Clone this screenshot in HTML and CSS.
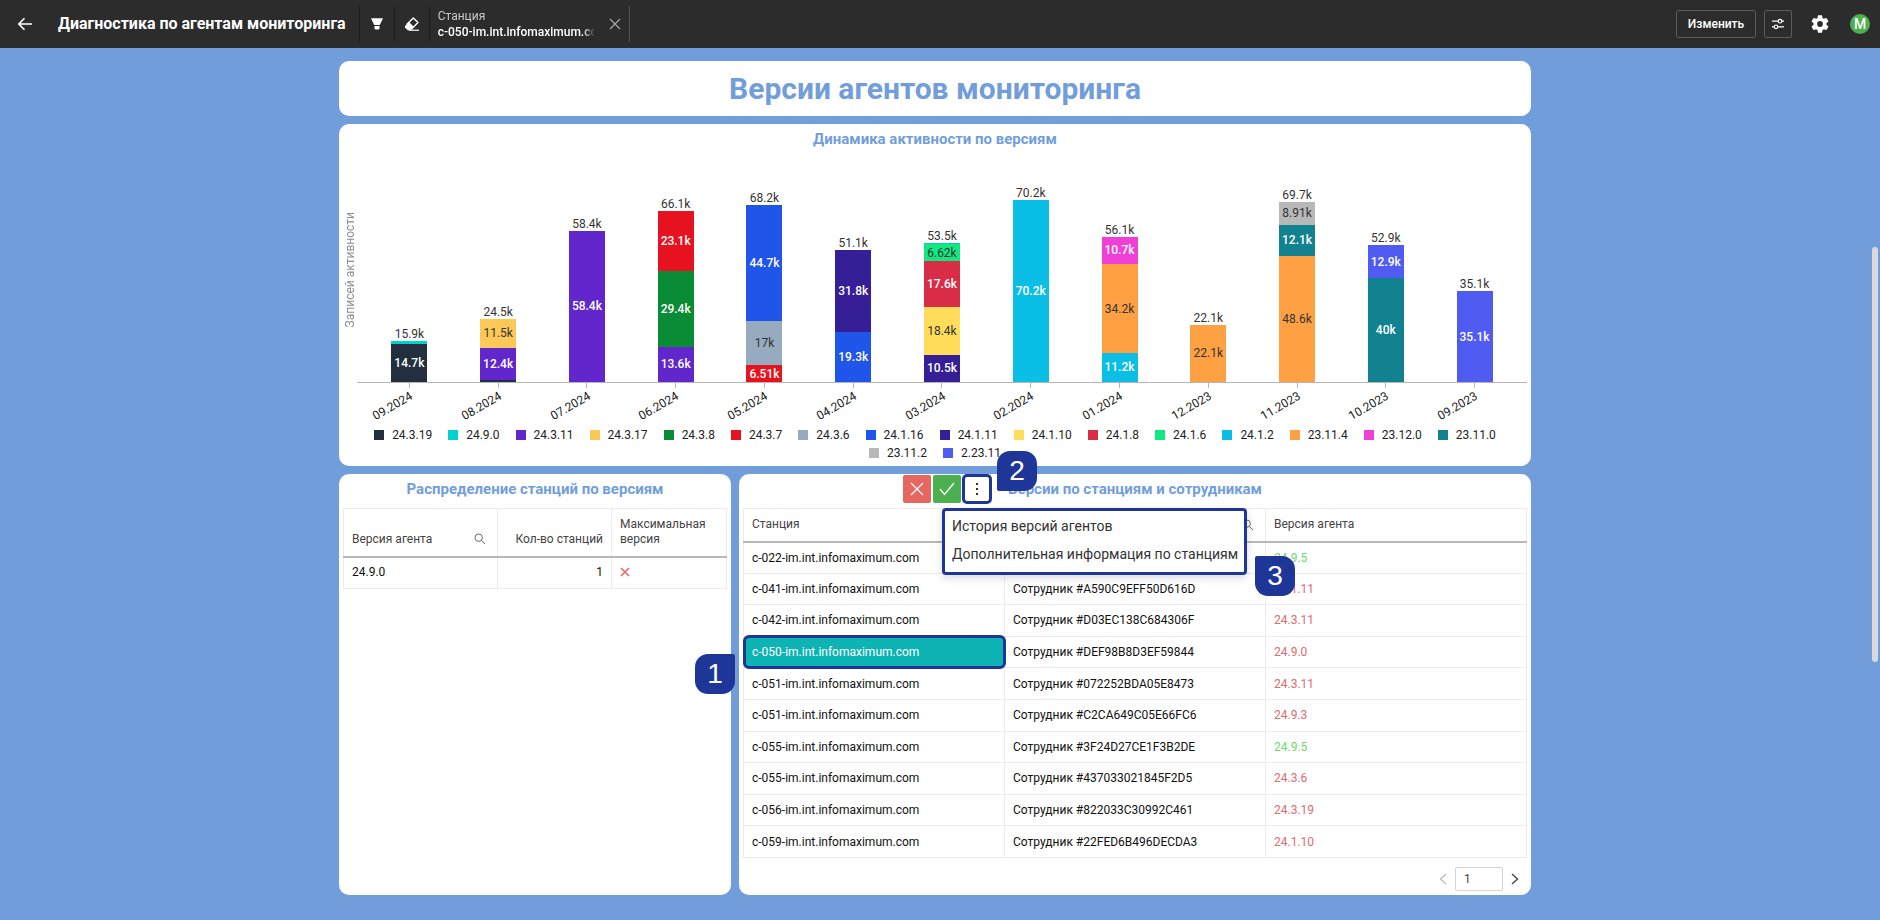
FILE: index.html
```html
<!DOCTYPE html>
<html lang="ru">
<head>
<meta charset="utf-8">
<title>Диагностика по агентам мониторинга</title>
<link rel="stylesheet" href="styles.css">
</head>
<body>
<header class="topbar">
  <button class="icon-btn back" aria-label="Назад"><svg width="16" height="16" viewBox="0 0 16 16" fill="none" stroke="#fff" stroke-width="1.6"><path d="M15 8H2M7.5 2.2 1.8 8l5.7 5.8"/></svg></button>
  <h1 class="page-name">Диагностика по агентам мониторинга</h1>
  <button class="icon-btn cell" aria-label="Фильтр"><svg width="14" height="14" viewBox="0 0 14 14" fill="#fff"><path d="M1 1.300h12L9.800 8H4.200zM4.500 9h5v2.700l-1 .8h-3l-1-.8z"/></svg></button>
  <button class="icon-btn cell" aria-label="Очистить"><svg width="16" height="16" viewBox="0 0 16 16"><path d="M9.300 2 14 6.500 8 12.600 3.200 8z" fill="none" stroke="#fff" stroke-width="1.400" stroke-linejoin="round"/><path d="M5 6 10 11 6.500 14.600H4L1 11.600V10z" fill="#fff"/><path d="M6 14.200h9" stroke="#fff" stroke-width="1.200"/></svg></button>
  <div class="filter cell">
    <div class="filter-text"><span class="filter-name">Станция</span><span class="filter-value">c-050-im.int.infomaximum.com</span></div>
    <button class="icon-btn" aria-label="Убрать фильтр"><svg width="12" height="12" viewBox="0 0 12 12" stroke="#aaa" stroke-width="1.100"><path d="m1 1 10 10M11 1 1 11"/></svg></button>
  </div>
  <div class="actions">
    <button class="outline-btn">Изменить</button>
    <button class="outline-btn square" aria-label="Параметры"><svg width="14" height="14" viewBox="0 0 14 14" fill="none" stroke="#fff" stroke-width="1.200"><path d="M1 4.200h6M11 4.200h2M1 9.800h2M7 9.800h6"/><circle cx="9" cy="4.200" r="1.800"/><circle cx="5" cy="9.800" r="1.800"/></svg></button>
    <button class="icon-btn gear" aria-label="Настройки"><svg width="18" height="18" viewBox="2 2 20 20" fill="#fff"><path d="M19.140 12.940c.04-.3.060-.610.060-.940s-.02-.640-.07-.940l2.030-1.580a.49.490 0 0 0 .12-.610l-1.920-3.320a.488.488 0 0 0-.590-.22l-2.390.960c-.5-.380-1.030-.7-1.620-.940l-.360-2.540a.484.484 0 0 0-.480-.410h-3.840c-.24 0-.430.170-.470.410l-.360 2.540c-.590.240-1.130.570-1.620.940l-2.390-.960a.488.488 0 0 0-.590.220L2.740 8.870c-.12.210-.08.470.12.610l2.030 1.580c-.05.3-.09.630-.09.940s.02.640.07.940l-2.030 1.580a.49.490 0 0 0-.12.610l1.920 3.320c.12.220.370.290.590.220l2.390-.960c.5.380 1.030.7 1.620.940l.360 2.540c.05.240.240.410.480.410h3.840c.24 0 .440-.170.470-.410l.360-2.540c.590-.240 1.130-.560 1.620-.940l2.390.960c.22.080.470 0 .590-.22l1.920-3.320c.12-.22.070-.470-.12-.610zM12 15.200A3.200 3.200 0 1 1 12 8.800a3.200 3.200 0 0 1 0 6.400z"/></svg></button>
    <button class="avatar">М</button>
  </div>
</header>

<main class="board">
  <section class="card banner"><h2>Версии агентов мониторинга</h2></section>

  <section class="card chart">
    <h3>Динамика активности по версиям</h3>
    <div class="chart-body">
      <div class="axis-name"><span>Записей активности</span></div>
      <div class="plot-area">
        <div class="plot">
          <div class="col"><b>15.9k</b><i class="seg aqua" style="--v:1.2"></i><i class="seg navy" style="--v:14.7">14.7k</i></div>
          <div class="col"><b>24.5k</b><i class="seg amber dark" style="--v:11.5">11.5k</i><i class="seg violet" style="--v:12.4">12.4k</i><i class="seg navy" style="--v:0.6"></i></div>
          <div class="col"><b>58.4k</b><i class="seg violet" style="--v:58.4">58.4k</i></div>
          <div class="col"><b>66.1k</b><i class="seg red" style="--v:23.1">23.1k</i><i class="seg green" style="--v:29.4">29.4k</i><i class="seg violet" style="--v:13.6">13.6k</i></div>
          <div class="col"><b>68.2k</b><i class="seg blue" style="--v:44.7">44.7k</i><i class="seg slate dark" style="--v:17">17k</i><i class="seg red" style="--v:6.51">6.51k</i></div>
          <div class="col"><b>51.1k</b><i class="seg indigo" style="--v:31.8">31.8k</i><i class="seg blue" style="--v:19.3">19.3k</i></div>
          <div class="col"><b>53.5k</b><i class="seg cyan" style="--v:0.38"></i><i class="seg mint dark" style="--v:6.62">6.62k</i><i class="seg crimson" style="--v:17.6">17.6k</i><i class="seg yellow dark" style="--v:18.4">18.4k</i><i class="seg indigo" style="--v:10.5">10.5k</i></div>
          <div class="col"><b>70.2k</b><i class="seg cyan" style="--v:70.2">70.2k</i></div>
          <div class="col"><b>56.1k</b><i class="seg pink" style="--v:10.7">10.7k</i><i class="seg orange dark" style="--v:34.2">34.2k</i><i class="seg cyan" style="--v:11.2">11.2k</i></div>
          <div class="col"><b>22.1k</b><i class="seg orange dark" style="--v:22.1">22.1k</i></div>
          <div class="col"><b>69.7k</b><i class="seg gray dark" style="--v:8.91">8.91k</i><i class="seg teal" style="--v:12.1">12.1k</i><i class="seg orange dark" style="--v:48.6">48.6k</i></div>
          <div class="col"><b>52.9k</b><i class="seg iris" style="--v:12.9">12.9k</i><i class="seg teal" style="--v:40">40k</i></div>
          <div class="col"><b>35.1k</b><i class="seg iris" style="--v:35.1">35.1k</i></div>
        </div>
        <div class="ticks">
          <div><span>09.2024</span></div><div><span>08.2024</span></div><div><span>07.2024</span></div><div><span>06.2024</span></div><div><span>05.2024</span></div><div><span>04.2024</span></div><div><span>03.2024</span></div><div><span>02.2024</span></div><div><span>01.2024</span></div><div><span>12.2023</span></div><div><span>11.2023</span></div><div><span>10.2023</span></div><div><span>09.2023</span></div>
        </div>
      </div>
    </div>
    <ul class="legend">
      <li><i class="navy"></i>24.3.19</li><li><i class="aqua"></i>24.9.0</li><li><i class="violet"></i>24.3.11</li><li><i class="amber"></i>24.3.17</li><li><i class="green"></i>24.3.8</li><li><i class="red"></i>24.3.7</li><li><i class="slate"></i>24.3.6</li><li><i class="blue"></i>24.1.16</li><li><i class="indigo"></i>24.1.11</li><li><i class="yellow"></i>24.1.10</li><li><i class="crimson"></i>24.1.8</li><li><i class="mint"></i>24.1.6</li><li><i class="cyan"></i>24.1.2</li><li><i class="orange"></i>23.11.4</li><li><i class="pink"></i>23.12.0</li><li><i class="teal"></i>23.11.0</li><li><i class="gray"></i>23.11.2</li><li><i class="iris"></i>2.23.11</li>
    </ul>
  </section>

  <div class="row">
    <section class="card panel">
      <h3>Распределение станций по версиям</h3>
      <table class="grid versions">
        <thead><tr>
          <th class="w-version"><div class="th-search"><span>Версия агента</span><svg width="12" height="12" viewBox="0 0 12 12" fill="none" stroke="#666"><circle cx="4.700" cy="4.700" r="3.700"/><path d="m7.500 7.500 3.500 3.500"/></svg></div></th>
          <th class="w-count num">Кол-во станций</th>
          <th>Максимальная версия</th>
        </tr></thead>
        <tbody><tr><td>24.9.0</td><td class="num">1</td><td><svg class="cross" width="10" height="10" viewBox="0 0 10 10" stroke="#e8636d" stroke-width="1.600"><path d="m1 1 8 8M9 1 1 9"/></svg></td></tr></tbody>
      </table>
    </section>

    <section class="card panel stations-panel">
      <h3>Версии по станциям и сотрудникам</h3>
      <table class="grid stations">
        <thead><tr>
          <th>Станция</th>
          <th><div class="th-search"><span>Сотрудник</span><svg width="12" height="12" viewBox="0 0 12 12" fill="none" stroke="#666"><circle cx="4.700" cy="4.700" r="3.700"/><path d="m7.500 7.500 3.500 3.500"/></svg></div></th>
          <th>Версия агента</th>
        </tr></thead>
        <tbody>
          <tr><td>c-022-im.int.infomaximum.com</td><td></td><td class="ok">24.9.5</td></tr>
          <tr><td>c-041-im.int.infomaximum.com</td><td>Сотрудник #A590C9EFF50D616D</td><td class="bad">24.1.11</td></tr>
          <tr><td>c-042-im.int.infomaximum.com</td><td>Сотрудник #D03EC138C684306F</td><td class="bad">24.3.11</td></tr>
          <tr><td class="selected">c-050-im.int.infomaximum.com<span class="marker one">1</span></td><td>Сотрудник #DEF98B8D3EF59844</td><td class="bad">24.9.0</td></tr>
          <tr><td>c-051-im.int.infomaximum.com</td><td>Сотрудник #072252BDA05E8473</td><td class="bad">24.3.11</td></tr>
          <tr><td>c-051-im.int.infomaximum.com</td><td>Сотрудник #C2CA649C05E66FC6</td><td class="bad">24.9.3</td></tr>
          <tr><td>c-055-im.int.infomaximum.com</td><td>Сотрудник #3F24D27CE1F3B2DE</td><td class="ok">24.9.5</td></tr>
          <tr><td>c-055-im.int.infomaximum.com</td><td>Сотрудник #437033021845F2D5</td><td class="bad">24.3.6</td></tr>
          <tr><td>c-056-im.int.infomaximum.com</td><td>Сотрудник #822033C30992C461</td><td class="bad">24.3.19</td></tr>
          <tr><td>c-059-im.int.infomaximum.com</td><td>Сотрудник #22FED6B496DECDA3</td><td class="bad">24.1.10</td></tr>
        </tbody>
      </table>
      <nav class="pager" aria-label="Страницы">
        <button class="icon-btn" aria-label="Предыдущая" disabled><svg width="8" height="12" viewBox="0 0 8 12" fill="none" stroke="#bbb" stroke-width="1.200"><path d="M7 1 1.500 6 7 11"/></svg></button>
        <input type="text" value="1" aria-label="Номер страницы">
        <button class="icon-btn" aria-label="Следующая"><svg width="8" height="12" viewBox="0 0 8 12" fill="none" stroke="#444" stroke-width="1.400"><path d="m1 1 5.500 5L1 11"/></svg></button>
      </nav>

      <div class="tools">
        <button class="tool cancel" aria-label="Отменить"><svg width="14" height="14" viewBox="0 0 14 14" stroke="#fff" stroke-width="1.200"><path d="m1 1 12 12M13 1 1 13"/></svg></button>
        <button class="tool accept" aria-label="Применить"><svg width="16" height="14" viewBox="0 0 16 14" fill="none" stroke="#fff" stroke-width="1.400"><path d="m1 7 4.500 5.500L15 1"/></svg></button>
        <button class="tool more" aria-label="Ещё"><svg width="4" height="14" viewBox="0 0 4 14" fill="#333"><path d="M1 1h2v2H1zM1 6h2v2H1zM1 11h2v2H1z"/></svg></button>
        <span class="marker two">2</span>
      </div>
      <div class="menu">
        <button>История версий агентов</button>
        <button>Дополнительная информация по станциям</button>
        <span class="marker three">3</span>
      </div>
    </section>
  </div>
</main>
<div class="scroll-thumb"></div>
</body>
</html>
```
FILE: styles.css
```css
* { box-sizing: border-box; }
body {
  margin: 0;
  min-height: 100vh;
  background: #719edb;
  color: #222;
  font: 12px/16px Roboto, "Open Sans", sans-serif;
}
h1, h2, h3, ul { margin: 0; padding: 0; }
button, input { font: inherit; color: inherit; }
button { border: 0; padding: 0; background: none; cursor: pointer; }
svg { display: block; }

.topbar {
  display: flex;
  align-items: center;
  height: 48px;
  padding: 0 10px 0 17px;
  background: #2c2c2c;
  color: #fff;
}
.icon-btn { display: flex; align-items: center; justify-content: center; }
.page-name { margin: 0 13px 0 25px; font-size: 16px; line-height: 20px; font-weight: 700; white-space: nowrap; }
.cell { width: 35px; height: 36px; border-left: 1px solid #1c1c1c; }
.filter { display: flex; align-items: center; justify-content: space-between; width: 201px; padding: 0 8px; border-right: 1px solid #505050; }
.filter-text { width: 157px; overflow: hidden; mask-image: linear-gradient(to right, #000 92%, transparent); }
.filter-text span { display: block; white-space: nowrap; }
.filter-name { color: #c8c8c8; }
.filter-value { font-weight: 500; }
.actions { display: flex; align-items: center; margin-left: auto; }
.outline-btn {
  width: 80px;
  height: 28px;
  margin-right: 8px;
  border: 1px solid #5c5c5c;
  border-radius: 2px;
  font-weight: 500;
}
.outline-btn.square { display: flex; align-items: center; justify-content: center; width: 28px; }
.gear { width: 40px; height: 28px; }
.avatar { width: 20px; height: 20px; margin: 0 0 0 10px; border-radius: 50%; background: #4caf50; font-size: 14px; font-weight: 500; }

.board {
  display: flex;
  flex-direction: column;
  gap: 8px;
  max-width: 1202px;
  margin: 13px auto 0;
  padding-right: 10px;
}
.card { border-radius: 10px; background: #fff; }
.banner { padding: 9px 0 8px; text-align: center; color: #719edb; }
.banner h2 { font-size: 30px; line-height: 38px; }
h3 { color: #719edb; font-size: 15px; line-height: 20px; text-align: center; }

.chart { padding: 5px 4px 4px; }
.chart-body { display: flex; padding-top: 51px; }
.axis-name { display: flex; align-items: center; justify-content: center; width: 14px; height: 140px; }
.axis-name span { writing-mode: vertical-rl; transform: rotate(180deg); color: #8c8c8c; white-space: nowrap; }
.plot-area { flex: 1; }
.plot { display: flex; height: 183px; padding: 0 8px; border-bottom: 1px solid #b5b5b5; }
.col { display: flex; flex: 1; flex-direction: column; align-items: center; justify-content: flex-end; }
.col b { flex: none; font-weight: 400; line-height: 14px; color: #333; }
.seg {
  display: flex;
  flex: none;
  align-items: center;
  justify-content: center;
  width: 36px;
  height: calc(var(--v) / 70.2 * 100%);
  overflow: hidden;
  color: #fff;
  font-style: normal;
  font-weight: 500;
}
.seg.dark { color: #333; font-weight: 400; }
.ticks { display: flex; padding: 0 8px; height: 43px; }
.ticks div { flex: 1; background: linear-gradient(#b5b5b5, #b5b5b5) center top / 1px 5px no-repeat; }
.ticks span { display: block; width: 50%; margin: 4px 0 0 2px; text-align: right; transform: rotate(-30deg); transform-origin: right center; }
.legend { display: flex; flex-wrap: wrap; justify-content: center; gap: 0 16px; list-style: none; line-height: 18px; }
.legend li { display: flex; align-items: center; gap: 8px; }
.legend i { width: 10px; height: 10px; }

.navy { background: #232f3e; }
.aqua { background: #00d1d1; }
.violet { background: #6127cd; }
.amber { background: #fcc959; }
.green { background: #0a8b36; }
.red { background: #e6121f; }
.slate { background: #96aac0; }
.blue { background: #1f55e8; }
.indigo { background: #351e96; }
.yellow { background: #ffdc59; }
.crimson { background: #d92c46; }
.mint { background: #10e880; }
.cyan { background: #0bbee6; }
.orange { background: #ffa043; }
.pink { background: #f03fd6; }
.teal { background: #128290; }
.gray { background: #b8b8b8; }
.iris { background: #505bf2; }

.row { display: grid; grid-template-columns: 392px 1fr; gap: 8px; }
.panel { padding: 5px 4px 4px; }
.stations-panel { position: relative; }
.grid { width: 100%; margin-top: 9px; border-collapse: collapse; table-layout: fixed; color: #111; }
.grid th, .grid td { border: 1px solid #ececec; padding: 0 8px; text-align: left; }
.grid th { height: 33px; border-bottom: 2px solid #b8b8b8; font-weight: 400; line-height: 15px; color: #444; vertical-align: middle; }
.grid td { height: 31px; }
.grid .num { text-align: right; }
.th-search { display: flex; align-items: center; justify-content: space-between; padding-right: 3px; }
.versions th { height: 48px; padding-bottom: 9px; vertical-align: bottom; }
.versions td { height: 32px; padding-bottom: 2px; }
.w-version { width: 154px; }
.w-count { width: 114px; }
.stations { height: 350px; }
.ok { color: #6fd66f; }
.bad { color: #e06a72; }
.grid .selected { position: relative; background: #0eb3b3; color: #fff; outline: 3px solid #1f3699; outline-offset: -2px; border-radius: 5px; }

.pager { display: flex; align-items: center; justify-content: flex-end; gap: 8px; margin: 9px 8px 0 0; }
.pager input { width: 48px; height: 24px; padding: 0 8px; border: 1px solid #d4d4d4; border-radius: 2px; background: #fff; color: #444; }

.tools { position: absolute; top: 0; left: 164px; display: flex; align-items: center; gap: 2px; }
.tool { display: flex; align-items: center; justify-content: center; width: 28px; height: 28px; border-radius: 2px; }
.cancel { background: #e66660; }
.accept { background: #4caf50; }
.more { width: 30px; height: 30px; margin-left: -1px; border: 3px solid #1f3699; border-radius: 5px; background: #fff; }
.menu {
  position: absolute;
  top: 34px;
  left: 203px;
  padding: 1px 6px 4px 7px;
  border: 3px solid #1f3699;
  border-radius: 4px;
  background: #fff;
  box-shadow: 0 3px 8px rgba(0, 0, 0, .15);
}
.menu button { display: block; height: 28px; font-size: 14px; white-space: nowrap; color: #333; }
.marker {
  position: absolute;
  width: 40px;
  height: 40px;
  border-radius: 13px;
  background: #1f3699;
  color: #fff;
  font: 28px/40px "Liberation Sans", Arial, sans-serif;
  text-align: center;
}
.one { right: 100%; top: 17px; margin-right: 9px; border-top-right-radius: 2px; }
.two { left: 94px; top: -23px; border-bottom-left-radius: 2px; }
.three { left: 310px; top: 45px; border-top-left-radius: 2px; }
.scroll-thumb { position: fixed; top: 247px; right: 2px; width: 6px; height: 415px; border-radius: 3px; background: #d9d9d9; }
```
